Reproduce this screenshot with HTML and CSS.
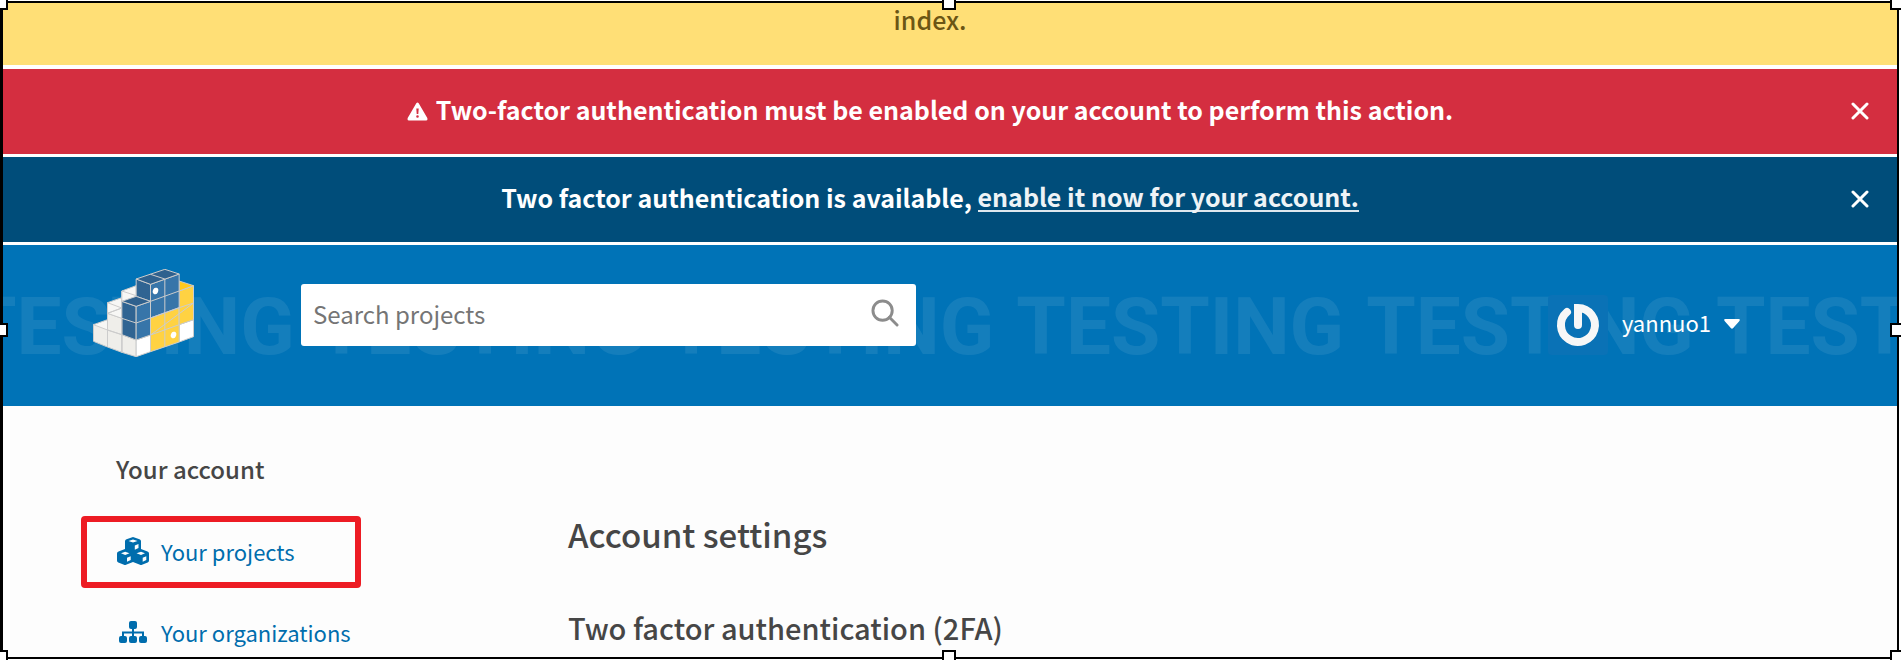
FILE: index.html
```html
<!DOCTYPE html>
<html lang="en">
<head>
<meta charset="utf-8">
<title>Account settings</title>
<link rel="stylesheet" href="styles.css">
</head>
<body>
<div class="frame">
  <div class="page">
    <div class="banner banner-warning">index.</div>
    <div class="banner banner-danger">
      <p class="banner-text"><svg class="banner-icon" viewBox="0 0 21 19" aria-hidden="true"><path fill-rule="evenodd" d="M9.3 1.2Q10.5-.4 11.7 1.2L20.3 16Q21 18.600 19 18.600H2Q0 18.600.7 16ZM9.300 6.500L9.700 12H11.300L11.700 6.500ZM10.500 13.200A1.300 1.300 0 1 0 10.500 15.800A1.300 1.300 0 1 0 10.500 13.200Z"/></svg>Two-factor authentication must be enabled on your account to perform this action.</p>
      <button class="close" aria-label="Close"><svg viewBox="0 0 18 18"><path d="M2 2L16 16M16 2L2 16"/></svg></button>
    </div>
    <div class="banner banner-info">
      <p class="banner-text">Two factor authentication is available, <a class="banner-link" href="#">enable it now for your account.</a></p>
      <button class="close" aria-label="Close"><svg viewBox="0 0 18 18"><path d="M2 2L16 16M16 2L2 16"/></svg></button>
    </div>
    <header class="header">
      <div class="watermark" aria-hidden="true"><span>TESTING</span><span>TESTING</span><span>TESTING</span><span>TESTING</span><span>TESTING</span><span>TESTING</span></div>
      <a class="logo" href="#" aria-label="PyPI">
        <svg viewBox="0 0 302 264">
          <g stroke="#ccc" stroke-width="3" stroke-linejoin="round">
            <path fill="#f7f7f5" d="M86 66L129 50V140H86ZM43 101L86 86V150H43ZM1 167L43 152V200H1Z"/>
            <path fill="#efeeea" d="M1 167L43 183V234L1 217ZM43 133L86 148V250L43 234ZM43 183L86 197M86 197L129 213V263L86 250Z"/>
            <path fill="#f7f7f5" d="M43 133L86 117V148ZM43 101L86 117L43 133ZM86 66L129 80V95L86 97Z"/>
            <path fill="#fff" d="M129 213L172 198V248L129 263ZM258 167L301 152V203L258 219Z"/>
            <path fill="#ffd242" d="M172 146L258 116V219L172 248Z"/>
            <path fill="#ffd242" d="M258 66L301 50V152L258 167Z"/>
            <path fill="#ffc91d" d="M258 36L301 50L258 66Z"/>
            <path fill="#306492" d="M86 97L129 112V213L86 197ZM129 30L172 46V97L129 82Z"/>
            <path fill="#3775a9" d="M129 112L172 97V198L129 213ZM172 46L258 15V116L172 147Z"/>
            <path fill="#2f618e" d="M86 97L129 82L172 97L129 112ZM129 30L215 1L258 15L172 46Z"/>
            <path fill="none" d="M43 183V234M86 148V250M86 148L129 162L258 116M43 183L86 197M172 16L215 30V132M172 97L258 66M172 198L301 102M172 198L258 167M215 132V233M258 116L301 102"/>
          </g>
          <ellipse cx="187" cy="66" rx="8" ry="10" fill="#fff" transform="rotate(20 187 66)"/>
          <ellipse cx="241" cy="198" rx="8" ry="10" fill="#fff" transform="rotate(20 241 198)"/>
        </svg>
      </a>
      <form class="search">
        <input class="search-input" type="text" placeholder="Search projects" aria-label="Search projects">
        <button class="search-button" type="button" aria-label="Search"><svg viewBox="0 0 29 29"><circle cx="12" cy="12" r="10"/><path d="M19 19L27 27"/></svg></button>
      </form>
      <button class="user">
        <span class="avatar"><svg viewBox="0 0 60 60"><path d="M19 17A17 17 0 1 0 30 13V30"/></svg></span>
        <span class="user-name">yannuo1</span>
        <svg class="caret" viewBox="0 0 16 10"><path d="M1.500 0H14.500Q17 0 15 2.500L9.200 9Q8 10.400 6.800 9L1 2.500Q-1 0 1.500 0Z"/></svg>
      </button>
    </header>
    <main class="content">
      <nav class="sidebar">
        <h2 class="sidebar-title">Your account</h2>
        <a class="nav-link highlighted" href="#">
          <svg viewBox="0 0 32 28" aria-hidden="true"><path fill-rule="evenodd" d="M16 0L22.500 2.200Q24 2.800 24 4.200V12L30.500 14.500Q32 15 32 16.500V23.500Q32 25 30.700 25.600L25 27.800Q24 28.200 23 27.800L16 25L9 27.800Q8 28.200 7 27.800L1.300 25.600Q0 25 0 23.500V16.500Q0 15 1.500 14.500L8 12V4.200Q8 2.800 9.500 2.200ZM11.500 4L16 5.600L20.500 4L16 2.500ZM17.800 8.500V12.700L21.500 11V7ZM4 16.300L8.200 18L12.500 16.300L8.200 14.800ZM10 20.700V24.800L13.700 23V19.200ZM19.500 16.300L24 18L28 16.300L24 14.800ZM25.700 20.700V24.800L29.300 23V19.200Z"/></svg>Your projects</a>
        <a class="nav-link" href="#">
          <svg viewBox="0 0 32 28" aria-hidden="true"><rect x="12" y="3" width="8" height="8" rx="2"/><rect x="2" y="18" width="8" height="7" rx="2"/><rect x="12" y="18" width="8" height="7" rx="2"/><rect x="22" y="18" width="8" height="7" rx="2"/><path class="wire" d="M16 10V19M6 19V14.500H26V19"/></svg>Your organizations</a>
      </nav>
      <section class="settings">
        <h1 class="title">Account settings</h1>
        <h2 class="subtitle">Two factor authentication (2FA)</h2>
      </section>
    </main>
  </div>
  <i class="handle top left"></i><i class="handle top center"></i><i class="handle top right"></i>
  <i class="handle middle left"></i><i class="handle middle right"></i>
  <i class="handle bottom left"></i><i class="handle bottom center"></i><i class="handle bottom right"></i>
</div>
</body>
</html>
```
FILE: styles.css
```css
* { box-sizing: border-box; }
body { margin: 0; background: #fff; font-family: "Noto Sans CJK SC", "Noto Sans", sans-serif; color: #464646; }
h1, h2, p { margin: 0; font-weight: 500; }
a { text-decoration: none; }
button { border: 0; padding: 0; background: none; font: inherit; color: inherit; cursor: pointer; }
svg { display: block; flex: none; }

.frame { position: relative; height: 100vh; padding: 1px 2px 1px 0; overflow: hidden; }
.page { height: 100%; overflow: hidden; border: 2px solid #000; border-left-width: 3px; background: #fdfdfd; }

.banner { position: relative; display: flex; align-items: center; justify-content: center; padding: 0 80px 5px 40px; height: 88px; border-bottom: 3px solid #fff; font-size: 25px; font-weight: 500; line-height: 36px; color: #fff; }
.banner-warning { height: 66px; padding-bottom: 30px; border-bottom-width: 4px; background: #ffdf76; color: #6b5514; }
.banner-danger { background: #d42e40; }
.banner-info { background: #004d7a; }
.banner-text { display: flex; align-items: center; white-space: pre; font-weight: 700; }
.banner-icon { width: 21px; height: 19px; margin: 4px 8px 0 0; fill: #fff; }
.banner-link { color: #eef3f6; line-height: 28px; border-bottom: 2px solid #dfe8ee; }
.close { position: absolute; right: 28px; top: 33px; }
.close svg { width: 18px; height: 18px; fill: none; stroke: #fff; stroke-width: 3; stroke-linecap: round; }

.header { position: relative; display: flex; align-items: flex-start; height: 161px; padding: 24px 157px 0 90px; overflow: hidden; background: #0073b7; color: #fff; }
.watermark { position: absolute; left: -36px; top: 36px; display: flex; gap: 22px; font: 700 80px/92px Roboto, sans-serif; color: #fff; opacity: .08; white-space: nowrap; }
.logo { position: relative; }
.logo svg { width: 101px; height: 88px; }
.search { position: relative; display: flex; width: 615px; height: 62px; margin: 15px 0 0 107px; border-radius: 3px; background: #fff; }
.search-input { flex: 1; min-width: 0; border: 0; padding: 0 12px 4px; background: none; font: 400 24px "Noto Sans CJK SC", sans-serif; color: #464646; outline: 0; }
.search-input::placeholder { color: #757575; opacity: 1; }
.search-button { padding: 0 17px 4px; }
.search-button svg { width: 28px; height: 28px; fill: none; stroke: #8c8c8c; stroke-width: 3; stroke-linecap: round; }
.user { position: relative; display: flex; align-items: center; margin: 26px 0 0 auto; font-size: 22px; }
.user-name { padding-bottom: 6px; }
.avatar { margin-right: 14px; border-radius: 4px; background: #0a72b6; }
.avatar svg { width: 60px; height: 60px; fill: none; stroke: #f7f7f7; stroke-width: 8; stroke-linecap: round; }
.caret { width: 16px; height: 10px; margin: 0 0 2px 13px; fill: #fff; }

.content { display: flex; padding: 0 78px; }
.sidebar { display: flex; flex-direction: column; align-items: flex-start; width: 487px; padding-top: 45px; }
.sidebar-title { margin: 0 0 29px 35px; font-size: 24px; line-height: 36px; }
.nav-link { display: flex; align-items: center; gap: 12px; width: 280px; height: 72px; margin-bottom: 9px; border: 6px solid transparent; padding: 0 0 2px 30px; font-size: 22px; color: #006dad; white-space: nowrap; }
.nav-link svg { width: 32px; height: 28px; fill: #006dad; }
.nav-link .wire { fill: none; stroke: #006dad; stroke-width: 2; }
.highlighted { border-color: #ed1c24; border-radius: 4px; }
.settings { padding-top: 104px; }
.title { font-size: 33px; line-height: 48px; margin-bottom: 49px; }
.subtitle { font-size: 29px; line-height: 40px; }

.handle { position: absolute; width: 14px; height: 14px; border: 2px solid #000; background: #fff; }
.top { top: -4px; }
.middle { top: calc(50% - 7px); }
.bottom { bottom: -4px; }
.left { left: -6px; }
.center { left: calc(50% - 9px); }
.right { right: -3px; }
```
